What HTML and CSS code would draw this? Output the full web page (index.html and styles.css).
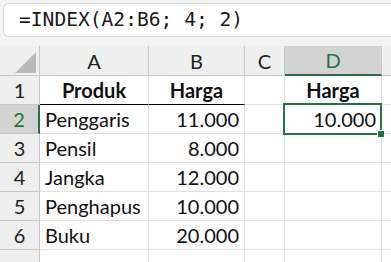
FILE: index.html
```html
<!DOCTYPE html>
<html lang="en">

<head>
    <link rel="stylesheet" href="styles.css">
</head>

<body>
    <div class="formula-bar">
        <div class="formula-box">=INDEX(A2:B6; 4; 2)</div>
    </div>
    <div class="sheet">
        <!-- column headers -->
        <div class="corner"><span class="corner-mark"></span></div>
        <div class="col-head">A</div>
        <div class="col-head">B</div>
        <div class="col-head">C</div>
        <div class="col-head active">D</div>
        <div class="col-head"></div>

        <div class="row-head">1</div>
        <div class="cell bold center underline">Produk</div>
        <div class="cell bold center underline">Harga</div>
        <div class="cell"></div>
        <div class="cell bold center">Harga</div>
        <div class="cell"></div>

        <div class="row-head active">2</div>
        <div class="cell">Penggaris</div>
        <div class="cell num">11.000</div>
        <div class="cell"></div>
        <div class="cell num selected">10.000<span class="selection"><span class="handle"></span></span></div>
        <div class="cell"></div>

        <div class="row-head">3</div>
        <div class="cell">Pensil</div>
        <div class="cell num">8.000</div>
        <div class="cell"></div>
        <div class="cell"></div>
        <div class="cell"></div>

        <div class="row-head">4</div>
        <div class="cell">Jangka</div>
        <div class="cell num">12.000</div>
        <div class="cell"></div>
        <div class="cell"></div>
        <div class="cell"></div>

        <div class="row-head">5</div>
        <div class="cell">Penghapus</div>
        <div class="cell num">10.000</div>
        <div class="cell"></div>
        <div class="cell"></div>
        <div class="cell"></div>

        <div class="row-head">6</div>
        <div class="cell">Buku</div>
        <div class="cell num">20.000</div>
        <div class="cell"></div>
        <div class="cell"></div>
        <div class="cell"></div>

        <div class="row-head">7</div>
        <div class="cell"></div>
        <div class="cell"></div>
        <div class="cell"></div>
        <div class="cell"></div>
        <div class="cell"></div>
    </div>
</body>

</html>
```

FILE: styles.css
```css
body {
    margin: 0;
    width: 391px;
    height: 262px;
    overflow: hidden;
    background-color: #ffffff;
    font-family: "Lato", "Open Sans", sans-serif;
    color: #111111;
}

.formula-bar {
    height: 46px;
    background-color: #f3f3f3;
    padding: 3px 0 0 3px;
    box-sizing: border-box;
}

.formula-box {
    height: 34px;
    background-color: #ffffff;
    border: 1px solid #d6d6d6;
    border-right: none;
    border-radius: 6px 0 0 6px;
    box-sizing: border-box;
    padding-left: 15px;
    font-family: "DejaVu Sans Mono", "Liberation Mono", monospace;
    font-size: 19.6px;
    line-height: 32px;
    color: #1a1a1a;
}

.sheet {
    display: grid;
    grid-template-columns: 40px 109px 96px 40px 97px 1fr;
    grid-template-rows: 30px repeat(6, 29px) 13px;
    font-size: 20px;
}

.corner,
.col-head,
.row-head {
    background-color: #efefef;
    border-right: 1px solid #c9c9c9;
    border-bottom: 1px solid #c9c9c9;
    box-sizing: border-box;
    display: flex;
    align-items: center;
    justify-content: center;
    color: #222222;
}

.corner {
    position: relative;
}

.corner-mark {
    position: absolute;
    right: 3px;
    bottom: 2px;
    width: 0;
    height: 0;
    border-left: 21px solid transparent;
    border-bottom: 21px solid #b9b9b9;
}

.col-head.active {
    background-color: #d3d3d3;
    color: #217346;
    border-bottom: 2px solid #217346;
}

.row-head.active {
    background-color: #d3d3d3;
    color: #217346;
    border-right: 2px solid #217346;
}

/* last row is only partly on screen */
.sheet > :nth-last-child(-n+6) {
    align-items: flex-start;
    overflow: hidden;
    padding-top: 8px;
    border-bottom: none;
}

.cell {
    border-right: 1px solid #e0e0e0;
    border-bottom: 1px solid #e0e0e0;
    box-sizing: border-box;
    display: flex;
    align-items: center;
    padding: 0 5px;
    white-space: nowrap;
}

.bold {
    font-weight: bold;
}

.center {
    justify-content: center;
}

.num {
    justify-content: flex-end;
}

.underline {
    border-bottom: 1px solid #000000;
}

.selected {
    position: relative;
}

.selection {
    position: absolute;
    top: -2px;
    left: -2px;
    right: -1px;
    bottom: -2px;
    border: 2px solid #217346;
}

.handle {
    position: absolute;
    right: -5px;
    bottom: -5px;
    width: 6px;
    height: 6px;
    background-color: #217346;
    border: 1px solid #ffffff;
}
```
